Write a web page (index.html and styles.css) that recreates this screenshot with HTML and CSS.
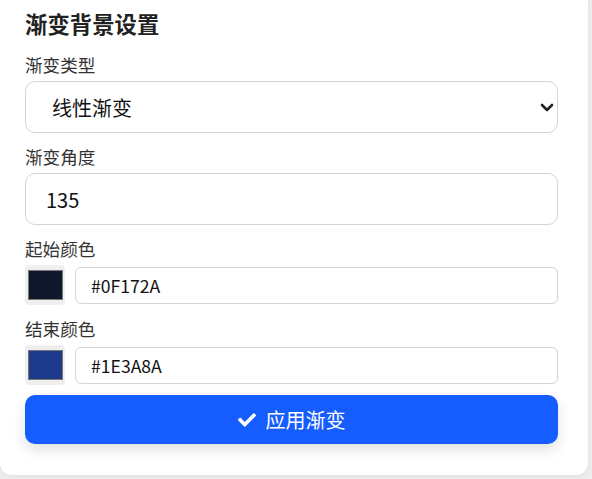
FILE: index.html
```html
<!DOCTYPE html>
<html lang="zh-CN">
<head>
<meta charset="utf-8">
<title>渐变背景设置</title>
<link rel="stylesheet" href="styles.css">
</head>
<body>
<div class="card">
  <h2 class="title">渐变背景设置</h2>
  <div class="group">
    <label class="label" for="type">渐变类型</label>
    <select id="type" class="control select">
      <option>线性渐变</option>
      <option>径向渐变</option>
    </select>
  </div>
  <div class="group">
    <label class="label" for="angle">渐变角度</label>
    <input id="angle" class="control" type="number" value="135">
  </div>
  <div class="group">
    <label class="label">起始颜色</label>
    <div class="color-row">
      <input class="swatch" type="color" value="#0f172a">
      <input class="hex" type="text" value="#0F172A">
    </div>
  </div>
  <div class="group group-last">
    <label class="label">结束颜色</label>
    <div class="color-row">
      <input class="swatch" type="color" value="#1e3a8a">
      <input class="hex" type="text" value="#1E3A8A">
    </div>
  </div>
  <button class="apply" type="button">
    <svg class="check" viewBox="0 0 512 512" aria-hidden="true"><path fill="currentColor" d="M173.898 439.404l-166.4-166.4c-9.997-9.997-9.997-26.206 0-36.204l36.203-36.204c9.997-9.998 26.207-9.998 36.204 0L192 312.69 432.095 72.596c9.997-9.997 26.207-9.997 36.204 0l36.203 36.204c9.997 9.997 9.997 26.206 0 36.204l-294.4 294.401c-9.998 9.997-26.207 9.997-36.204-.001z"/></svg>
    <span>应用渐变</span>
  </button>
</div>
</body>
</html>
```

FILE: styles.css
```css
html, body {
  margin: 0;
  padding: 0;
  background: #efefef;
  height: 100%;
  overflow: hidden;
}
body {
  font-family: "Noto Sans CJK SC", "Noto Sans", sans-serif;
  color: #333;
}
.card {
  margin: -12px 4px 0 0;
  padding: 20px 30px 31px 25px;
  background: #fff;
  border-radius: 12px;
  box-shadow: 0 2px 10px rgba(0, 0, 0, 0.06);
}
.title {
  margin: 0 0 15px;
  font-size: 22.4px;
  line-height: 30px;
  font-weight: 700;
  color: #222;
}
.group {
  margin-bottom: 12px;
}
.group-last {
  margin-bottom: 10px;
}
.label {
  display: block;
  font-size: 17.6px;
  line-height: 24px;
  margin-bottom: 4px;
  color: #333;
}
.control {
  display: block;
  box-sizing: border-box;
  width: 100%;
  height: 52px;
  padding: 0 20px;
  border: 1px solid #d4d4d8;
  border-radius: 10px;
  background: #fff;
  font-family: inherit;
  font-size: 20px;
  color: #111;
  outline: none;
}
.select {
  -webkit-appearance: none;
  appearance: none;
  padding-left: 26px;
  padding-right: 24px;
  background-image: url("data:image/svg+xml,%3Csvg xmlns='http://www.w3.org/2000/svg' width='14' height='9' viewBox='0 0 14 9'%3E%3Cpath d='M2 2l5 5 5-5' fill='none' stroke='%23222' stroke-width='2.6' stroke-linecap='round' stroke-linejoin='round'/%3E%3C/svg%3E");
  background-repeat: no-repeat;
  background-position: right 3px center;
  background-size: 14px 9px;
}
input[type=number]::-webkit-inner-spin-button,
input[type=number]::-webkit-outer-spin-button {
  -webkit-appearance: none;
  margin: 0;
}
.color-row {
  display: flex;
  align-items: center;
  gap: 10px;
}
.swatch {
  flex: none;
  width: 40px;
  height: 40px;
  padding: 0;
  border: none;
  border-radius: 4px;
  background: #efefef;
  cursor: pointer;
}
.swatch::-webkit-color-swatch-wrapper {
  padding: 5px 2px 5px 3px;
}
.swatch::-webkit-color-swatch {
  border: 1px solid #777;
  border-radius: 0;
}
.hex {
  flex: 1;
  box-sizing: border-box;
  height: 37px;
  padding: 0 15px;
  border: 1px solid #d4d4d8;
  border-radius: 6px;
  font-family: inherit;
  font-size: 17.6px;
  color: #111;
  outline: none;
}
.apply {
  display: flex;
  align-items: center;
  justify-content: center;
  gap: 10px;
  width: 100%;
  height: 49px;
  border: none;
  border-radius: 10px;
  background: #165dff;
  color: #fff;
  font-family: inherit;
  font-size: 20px;
  box-shadow: 0 6px 14px rgba(0, 0, 0, 0.12);
  cursor: pointer;
}
.check {
  width: 18px;
  height: 18px;
}
```
